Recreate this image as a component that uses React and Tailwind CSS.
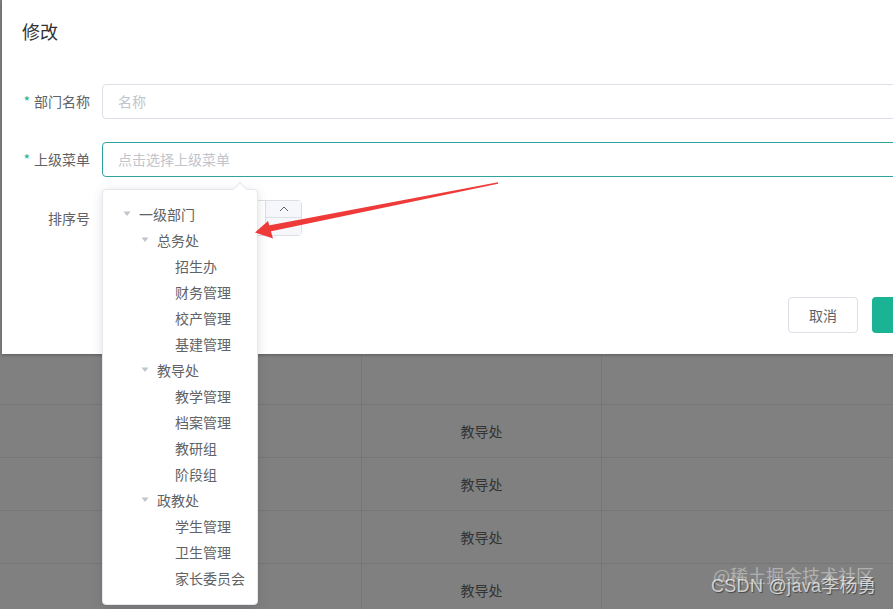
import React from "react";

const tree = [
  { t: "一级部门", l: 1, a: true },
  { t: "总务处", l: 2, a: true },
  { t: "招生办", l: 3 },
  { t: "财务管理", l: 3 },
  { t: "校产管理", l: 3 },
  { t: "基建管理", l: 3 },
  { t: "教导处", l: 2, a: true },
  { t: "教学管理", l: 3 },
  { t: "档案管理", l: 3 },
  { t: "教研组", l: 3 },
  { t: "阶段组", l: 3 },
  { t: "政教处", l: 2, a: true },
  { t: "学生管理", l: 3 },
  { t: "卫生管理", l: 3 },
  { t: "家长委员会", l: 3 },
];

const indent = { 1: "pl-[12px]", 2: "pl-[30px]", 3: "pl-[48px]" };

function Caret() {
  return (
    <svg width="8" height="6" viewBox="0 0 8 6">
      <path d="M0.5 0.5 L7.5 0.5 L4 5 Z" fill="#c0c4cc" />
    </svg>
  );
}

export default function App() {
  const font = { fontFamily: '"Noto Sans CJK SC", "Noto Sans", sans-serif' };
  return (
    <div
      className="relative w-[893px] h-[609px] overflow-hidden bg-[#808080]"
      style={font}
    >
      {/* background table */}
      <div className="pt-[355px]">
        <div className="grid grid-cols-[362px_240px_1fr] border-b border-[#767676]">
          <div className="h-[49px] border-r border-[#767676]" />
          <div className="h-[49px] border-r border-[#767676]" />
          <div className="h-[49px]" />
        </div>
        {[0, 1, 2, 3].map((i) => (
          <div
            key={i}
            className="grid grid-cols-[362px_240px_1fr] border-b border-[#767676]"
          >
            <div className="h-[52px] border-r border-[#767676]" />
            <div className="h-[52px] border-r border-[#767676] flex items-center justify-center text-[14px] text-[#333333]">
              教导处
            </div>
            <div className="h-[52px]" />
          </div>
        ))}
      </div>

      {/* modal */}
      <div className="absolute left-[2px] top-0 w-[960px] h-[354px] bg-white shadow-[0_1px_3px_rgba(0,0,0,0.3)] flex flex-col">
        <div className="pl-[20px] pt-[18px] h-[84px] text-[18px] leading-[26px] text-[#303133]">
          修改
        </div>
        <div className="flex flex-col gap-[23px]">
          <div className="flex items-center">
            <div className="w-[100px] pr-[12px] text-right text-[14px] text-[#606266]">
              <span className="text-[#1ab394] mr-[4px]">*</span>部门名称
            </div>
            <div className="flex-1 h-[35px] border border-[#dcdfe6] rounded-[4px] flex items-center pl-[15px] text-[14px] text-[#c0c4cc]">
              名称
            </div>
          </div>
          <div className="flex items-center">
            <div className="w-[100px] pr-[12px] text-right text-[14px] text-[#606266]">
              <span className="text-[#1ab394] mr-[4px]">*</span>上级菜单
            </div>
            <div className="flex-1 h-[35px] border border-[#2fa3a0] rounded-[4px] flex items-center pl-[15px] text-[14px] text-[#c0c4cc]">
              点击选择上级菜单
            </div>
          </div>
          <div className="flex items-center">
            <div className="w-[100px] pr-[12px] text-right text-[14px] text-[#606266]">
              排序号
            </div>
            <div className="w-[200px] h-[36px] border border-[#dcdfe6] rounded-[4px] flex justify-end">
              <div className="w-[36px] h-full border-l border-[#dcdfe6] flex flex-col">
                <div className="h-1/2 bg-[#f5f7fa] border-b border-[#dcdfe6] flex items-center justify-center">
                  <svg width="10" height="6" viewBox="0 0 10 6">
                    <path d="M1 5 L5 1 L9 5" fill="none" stroke="#606266" strokeWidth="1" />
                  </svg>
                </div>
                <div className="h-1/2 bg-[#f5f7fa]" />
              </div>
            </div>
          </div>
        </div>
        <div className="flex gap-[14px] pl-[786px] pt-[61px]">
          <div className="w-[70px] h-[36px] border border-[#dcdfe6] rounded-[4px] flex items-center justify-center text-[14px] text-[#606266]">
            取消
          </div>
          <div className="w-[70px] h-[36px] rounded-[4px] bg-[#1ab394]" />
        </div>
      </div>

      {/* dropdown */}
      <div className="absolute left-[102px] top-[189px] w-[156px] h-[416px] bg-white rounded-[4px] border border-[#e4e7ed] shadow-[0_2px_12px_rgba(0,0,0,0.12)] pt-[11px]">
        <div className="absolute -top-[6px] left-[132px] w-[10px] h-[10px] bg-white border-l border-t border-[#e4e7ed] rotate-45" />
        {tree.map((n, i) => (
          <div
            key={i}
            className={`h-[26px] flex items-center text-[14px] text-[#606266] ${indent[n.l]}`}
          >
            <div className="w-[24px] flex items-center justify-center">
              {n.a ? <Caret /> : null}
            </div>
            <span>{n.t}</span>
          </div>
        ))}
      </div>

      {/* red arrow */}
      <svg
        className="absolute left-0 top-0 pointer-events-none"
        width="893"
        height="609"
        viewBox="0 0 893 609"
      >
        <polygon
          points="498,182.3 498,183.8 270,231.5 268.5,225.5"
          fill="#ef3a3a"
        />
        <polygon points="255,232.5 268,221 273,238.5" fill="#ef3a3a" />
      </svg>

      {/* watermark */}
      <div className="absolute left-[713px] top-[563px] text-[18px] leading-[24px] text-white/40 whitespace-nowrap">
        @稀土掘金技术社区
      </div>
      <div className="absolute left-[711px] top-[574px] text-[18px] leading-[24px] tracking-[0.3px] text-white/70 whitespace-nowrap [text-shadow:1px_1px_1px_rgba(0,0,0,0.45)]" style={{ fontFamily: '"Liberation Sans", "Noto Sans CJK SC", sans-serif' }}>
        CSDN @java李杨勇
      </div>
    </div>
  );
}
